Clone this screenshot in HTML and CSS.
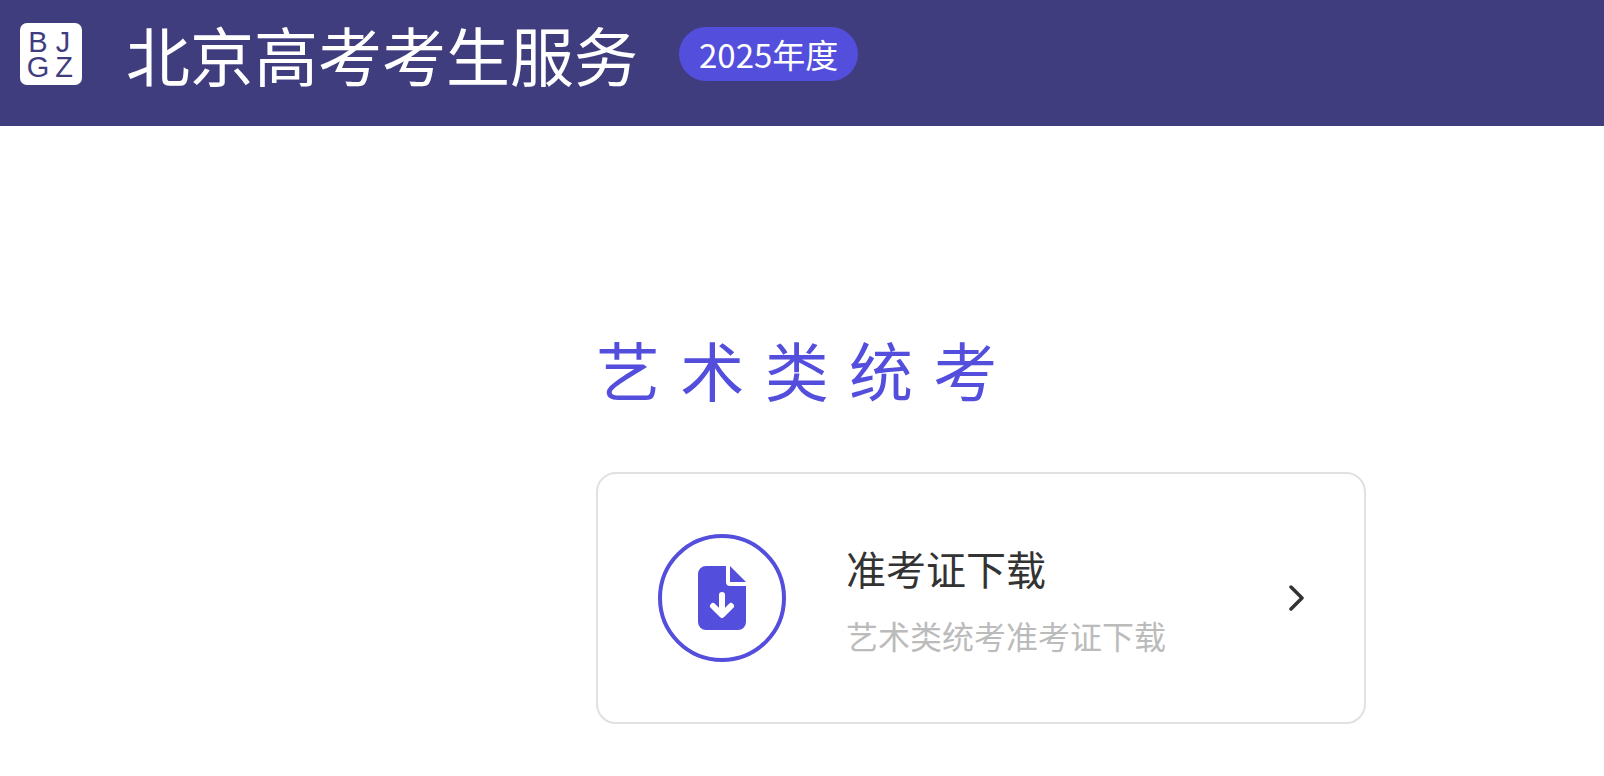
FILE: index.html
```html
<!DOCTYPE html>
<html lang="zh-CN">
<head>
    <meta charset="UTF-8">
    <meta name="viewport" content="width=device-width, initial-scale=1.0">
    <title>北京高考考生服务</title>
    <link rel="stylesheet" href="styles.css">
</head>
<body>
    <header class="header">
        <svg class="logo" viewBox="0 0 62 62" role="img" aria-label="BJGZ">
            <rect width="62" height="62" rx="7" fill="#fff"/>
            <g class="logo-text">
                <text x="18" y="29">B</text>
                <text x="43" y="29">J</text>
                <text x="18" y="54">G</text>
                <text x="44" y="54">Z</text>
            </g>
        </svg>
        <h1 class="site-title">北京高考考生服务</h1>
        <span class="year">2025年度</span>
    </header>

    <main class="content">
        <h2 class="section-title">艺 术 类 统 考</h2>
        <a class="card" href="#download">
            <span class="card-icon">
                <svg width="48" height="64" viewBox="0 0 48 64" aria-hidden="true">
                    <path fill="#544edc" d="M8 0H28V16a4 4 0 0 0 4 4H48V56a8 8 0 0 1-8 8H8a8 8 0 0 1-8-8V8a8 8 0 0 1 8-8z"/>
                    <path fill="#544edc" d="M32 0L48 16H32z"/>
                    <path fill="none" stroke="#fff" stroke-width="6" stroke-linecap="round" stroke-linejoin="round" d="M24 29V48M15 40L24 49L33 40"/>
                </svg>
            </span>
            <span class="card-text">
                <span class="card-title">准考证下载</span>
                <span class="card-desc">艺术类统考准考证下载</span>
            </span>
            <svg class="arrow" width="15" height="26" viewBox="0 0 15 26" aria-hidden="true">
                <path fill="none" stroke="#333" stroke-width="3.5" stroke-linecap="round" stroke-linejoin="round" d="M2 2L13 13L2 24"/>
            </svg>
        </a>
    </main>
</body>
</html>
```
FILE: styles.css
```css
* {
    box-sizing: border-box;
}

body {
    margin: 0;
    background-color: #fff;
    color: #333;
    font-family: "Noto Sans CJK SC", sans-serif;
}

.header {
    display: flex;
    align-items: flex-start;
    padding: 5px 20px 25px;
    background-color: #403d7f;
    color: #fff;
}

.logo {
    flex: none;
    width: 62px;
    height: 62px;
    margin-top: 18px;
}

.logo-text {
    fill: #403d7f;
    font-family: "Liberation Sans", sans-serif;
    font-size: 29px;
    text-anchor: middle;
}

.site-title {
    margin: 0 0 0 44px;
    font-size: 64px;
    font-weight: 400;
    line-height: 96px;
    white-space: nowrap;
}

.year {
    margin: 22px 0 0 41px;
    padding: 0 20px;
    border-radius: 27px;
    background-color: #544edc;
    font-size: 33px;
    line-height: 54px;
    white-space: nowrap;
}

.content {
    max-width: 1366px;
    padding: 200px 0 52px 596px;
}

.section-title {
    margin: 0 0 50px;
    color: #544edc;
    font-family: "DejaVu Sans", "Noto Sans CJK SC", sans-serif;
    font-size: 64px;
    font-weight: 400;
    line-height: 96px;
    white-space: nowrap;
}

.card {
    display: flex;
    align-items: center;
    gap: 60px;
    padding: 60px;
    border: 2px solid #e1e1e1;
    border-radius: 20px;
    color: #333;
    text-decoration: none;
}

.card-icon {
    display: flex;
    flex: none;
    align-items: center;
    justify-content: center;
    width: 128px;
    height: 128px;
    border: 4px solid #544edc;
    border-radius: 50%;
}

.card-text {
    display: flex;
    flex: 1;
    flex-direction: column;
    gap: 13px;
}

.card-title {
    font-size: 40px;
    line-height: 60px;
}

.card-desc {
    color: #bbb;
    font-size: 32px;
    line-height: 48px;
}

.arrow {
    flex: none;
}
```
